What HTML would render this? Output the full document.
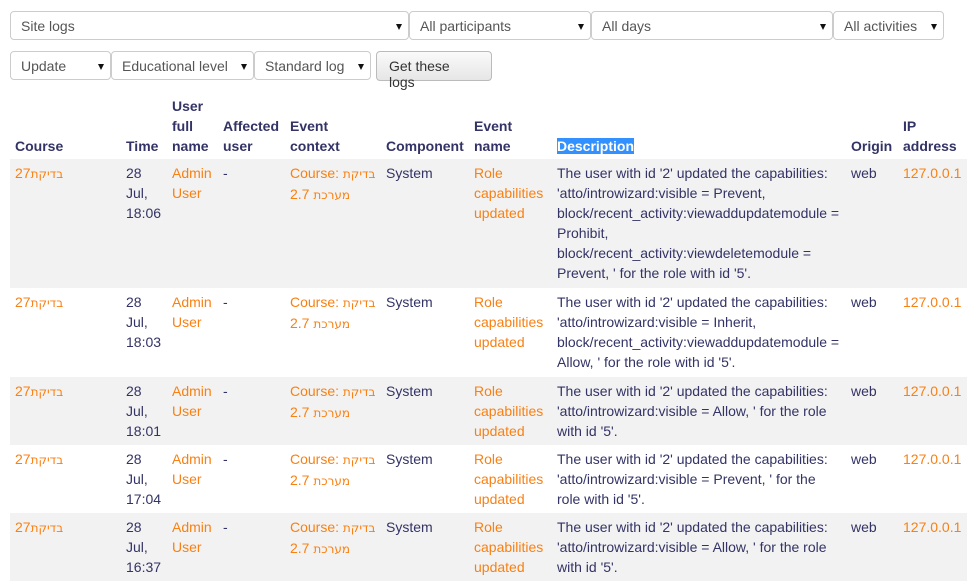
<!DOCTYPE html>
<html><head><meta charset="utf-8"><style>
*{margin:0;padding:0;box-sizing:border-box}
body{width:978px;height:581px;overflow:hidden;background:#fff;font-family:"Liberation Sans",sans-serif;font-size:14px;color:#333366;position:relative}
.s{position:absolute;height:29px;border:1px solid #ccc;border-radius:4px;background:#fff;color:#555;padding:6px 10px;line-height:16px}
.s:after{content:"";position:absolute;right:6px;top:12px;border-left:3.5px solid transparent;border-right:3.5px solid transparent;border-top:6px solid #111}
.b{position:absolute;height:30px;border:1px solid #bbb;border-radius:4px;background:linear-gradient(#fafafa,#e6e6e6);color:#333;padding:6px 12px;line-height:16px}
table{position:absolute;left:10px;top:92px;border-collapse:collapse;table-layout:fixed;width:957px}
td,th{padding:4px 5px;line-height:20px;vertical-align:top;text-align:left;overflow:hidden}
th{vertical-align:bottom;font-weight:bold;padding-bottom:3px}
tr.o td{background:#f2f2f2}
.a{color:#f98012}
.h{font-family:"DejaVu Sans","Liberation Sans",sans-serif;font-size:12px}
.sel{background:#3390ff;color:#fff}
</style></head><body>
<div class="s" style="left:10px;top:11px;width:399px">Site logs</div>
<div class="s" style="left:409px;top:11px;width:182px">All participants</div>
<div class="s" style="left:591px;top:11px;width:242px">All days</div>
<div class="s" style="left:833px;top:11px;width:111px">All activities</div>
<div class="s" style="left:10px;top:51px;width:101px">Update</div>
<div class="s" style="left:111px;top:51px;width:143px">Educational level</div>
<div class="s" style="left:254px;top:51px;width:117px">Standard log</div>
<div class="b" style="left:376px;top:51px;width:116px">Get these logs</div>
<table>
<colgroup><col style="width:111px"><col style="width:46px"><col style="width:51px"><col style="width:67px"><col style="width:96px"><col style="width:88px"><col style="width:83px"><col style="width:294px"><col style="width:52px"><col style="width:69px"></colgroup>
<tr><th>Course</th><th>Time</th><th>User full name</th><th>Affected user</th><th>Event context</th><th>Component</th><th>Event name</th><th><span class="sel">Description</span></th><th>Origin</th><th>IP address</th></tr>
<tr class="o"><td class="a"><span class="h">בדיקת</span>27</td><td>28 Jul, 18:06</td><td class="a">Admin User</td><td>-</td><td class="a">Course: <span class="h">בדיקת מערכת</span> 2.7</td><td>System</td><td class="a">Role capabilities updated</td><td style="padding-bottom:5px">The user with id '2' updated the capabilities: 'atto/introwizard:visible = Prevent, block/recent_activity:viewaddupdatemodule = Prohibit, block/recent_activity:viewdeletemodule = Prevent, ' for the role with id '5'.</td><td>web</td><td class="a">127.0.0.1</td></tr>
<tr><td class="a"><span class="h">בדיקת</span>27</td><td>28 Jul, 18:03</td><td class="a">Admin User</td><td>-</td><td class="a">Course: <span class="h">בדיקת מערכת</span> 2.7</td><td>System</td><td class="a">Role capabilities updated</td><td style="padding-bottom:5px">The user with id '2' updated the capabilities: 'atto/introwizard:visible = Inherit, block/recent_activity:viewaddupdatemodule = Allow, ' for the role with id '5'.</td><td>web</td><td class="a">127.0.0.1</td></tr>
<tr class="o"><td class="a"><span class="h">בדיקת</span>27</td><td>28 Jul, 18:01</td><td class="a">Admin User</td><td>-</td><td class="a">Course: <span class="h">בדיקת מערכת</span> 2.7</td><td>System</td><td class="a">Role capabilities updated</td><td>The user with id '2' updated the capabilities: 'atto/introwizard:visible = Allow, ' for the role with id '5'.</td><td>web</td><td class="a">127.0.0.1</td></tr>
<tr><td class="a"><span class="h">בדיקת</span>27</td><td>28 Jul, 17:04</td><td class="a">Admin User</td><td>-</td><td class="a">Course: <span class="h">בדיקת מערכת</span> 2.7</td><td>System</td><td class="a">Role capabilities updated</td><td>The user with id '2' updated the capabilities: 'atto/introwizard:visible = Prevent, ' for the role with id '5'.</td><td>web</td><td class="a">127.0.0.1</td></tr>
<tr class="o"><td class="a"><span class="h">בדיקת</span>27</td><td>28 Jul, 16:37</td><td class="a">Admin User</td><td>-</td><td class="a">Course: <span class="h">בדיקת מערכת</span> 2.7</td><td>System</td><td class="a">Role capabilities updated</td><td>The user with id '2' updated the capabilities: 'atto/introwizard:visible = Allow, ' for the role with id '5'.</td><td>web</td><td class="a">127.0.0.1</td></tr>
</table>
</body></html>
